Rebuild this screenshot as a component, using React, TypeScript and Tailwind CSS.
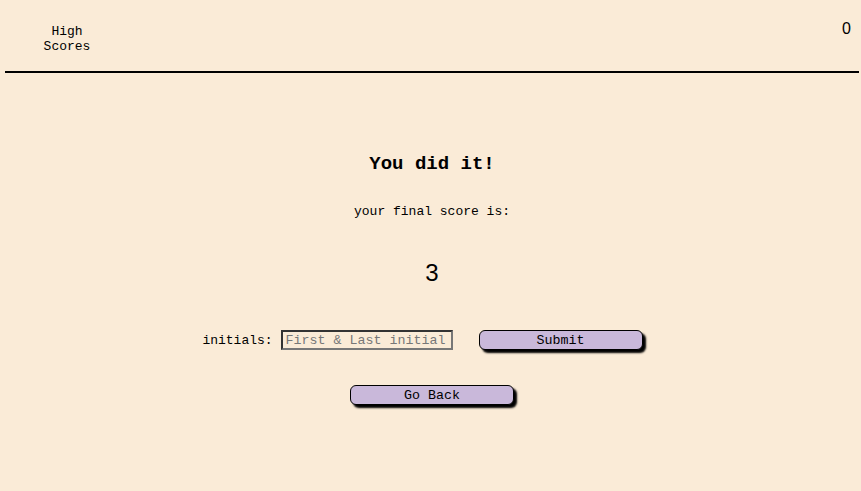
const mono = "font-['Liberation_Mono','Courier_New',monospace]";

const App = () => {
  return (
    <div className={`min-h-screen bg-[#faebd7] text-black ${mono}`}>
      <header className="ml-[5px] mr-[2px] flex justify-between items-start border-b-2 border-black h-[73px]">
        <a href="#" className="ml-[32px] mt-[24px] w-[60px] text-center text-[13px] leading-[15px] text-black">
          High Scores
        </a>
        <div className="mt-[20px] mr-[8px] font-['Liberation_Sans',Arial,sans-serif] text-[16px] leading-[18px]">0</div>
      </header>
      <main className="flex flex-col items-center pl-[3px]">
        <h1 className="mt-[80px] text-[19px] leading-[22px] font-bold">You did it!</h1>
        <p className="mt-[29px] text-[13px] leading-[15px]">your final score is:</p>
        <div className="mt-[40px] font-['Liberation_Sans',Arial,sans-serif] text-[24px] leading-[28px]">3</div>
        <div className="mt-[43px] mr-[19px] flex items-center">
          <label className="text-[13px] leading-[15px]">initials:</label>
          <input
            type="text"
            placeholder="First & Last initial"
            className={`ml-[8px] w-[172px] h-[20px] px-[3px] bg-transparent border-2 border-t-[#333] border-l-[#333] border-b-[#777] border-r-[#777] text-[13.33px] placeholder:text-[#777] outline-none ${mono}`}
          />
          <button className={`ml-[26px] w-[164px] h-[20px] pt-[1px] rounded-[6px] border border-black bg-[#c9b8da] shadow-[3px_3px_2px_#000] text-[13.33px] leading-[15px] ${mono}`}>
            Submit
          </button>
        </div>
        <button className={`mt-[35px] w-[164px] h-[20px] pt-[1px] rounded-[6px] border border-black bg-[#c9b8da] shadow-[3px_3px_2px_#000] text-[13.33px] leading-[15px] ${mono}`}>
          Go Back
        </button>
      </main>
    </div>
  );
};

export default App;
